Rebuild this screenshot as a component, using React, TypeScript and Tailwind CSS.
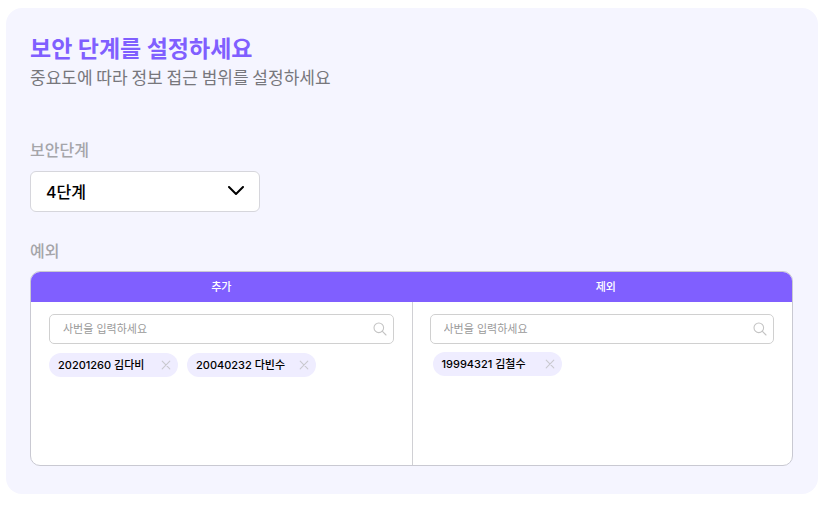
import React, { useState } from 'react'

type Employee = {
    id: string;
    name: string;
}

const SearchIcon = () => (
    <svg className="h-3.5 w-3.5" viewBox="0 0 14 14" fill="none" stroke="#c4c4c4" strokeWidth="1.1" strokeLinecap="round">
        <circle cx="5.8" cy="5.8" r="4.8" />
        <path d="M9.2 9.2L13 13" />
    </svg>
)

const CloseIcon = () => (
    <svg className="h-2.5 w-2.5" viewBox="0 0 10 10" fill="none" stroke="#c9c9cf" strokeWidth="1.1" strokeLinecap="round">
        <path d="M1.2 1.2L8.8 8.8M8.8 1.2L1.2 8.8" />
    </svg>
)

const EmployeeChip = ({ employee, onRemove }: { employee: Employee; onRemove: () => void }) => {
    return (
        <li className="flex h-6 min-w-[129px] items-center justify-between gap-3.5 rounded-full bg-[#efedff] pl-[9px] pr-[7px] text-[11px] font-medium text-black">
            <span className="whitespace-nowrap">{employee.id} {employee.name}</span>
            <button type="button" onClick={onRemove} aria-label={`${employee.name} 삭제`}>
                <CloseIcon />
            </button>
        </li>
    )
}

const ExceptionPanel = ({ label, initial, className, headerClassName, listClassName }: {
    label: string;
    initial: Employee[];
    className?: string;
    headerClassName: string;
    listClassName: string;
}) => {
    const [employees, setEmployees] = useState(initial);

    return (
        <section aria-label={label} className={className}>
            <h3 className={headerClassName}>
                {label}
            </h3>
            <div className="px-[18px] pt-3">
                <label className="flex h-[30px] items-center rounded-[5px] border border-[#d0d0d0] bg-white pl-[13px] pr-1.5">
                    <input
                        type="text"
                        aria-label={`${label} 사번`}
                        placeholder="사번을 입력하세요"
                        className="min-w-0 flex-1 text-[11px] outline-none placeholder:text-[#9a9a9a]"
                    />
                    <SearchIcon />
                </label>
                <ul className={listClassName}>
                    {employees.map((employee) => (
                        <EmployeeChip
                            key={employee.id}
                            employee={employee}
                            onRemove={() => setEmployees(employees.filter((e) => e.id !== employee.id))}
                        />
                    ))}
                </ul>
            </div>
        </section>
    )
}

const App = () => {
    const [level, setLevel] = useState("4");

    return (
        <div className="bg-white pt-2 pr-2.5 pb-3 pl-1.5 font-['Inter','Noto_Sans_CJK_KR',sans-serif]">
            <main className="rounded-2xl bg-[#f5f5ff] pt-[25px] pr-[25px] pb-7 pl-6">
                <h1 className="text-[23px] leading-8 font-bold text-[#805fff]">보안 단계를 설정하세요</h1>
                <p className="font-['Noto_Sans_CJK_KR',sans-serif] text-[17px] leading-6 text-[#77777c]">중요도에 따라 정보 접근 범위를 설정하세요</p>

                <label htmlFor="level" className="mt-[49px] block w-fit text-base leading-6 font-medium text-[#a5a5aa]">보안단계</label>
                <div className="relative mt-[9px] w-[230px]">
                    <select
                        id="level"
                        value={level}
                        onChange={(e) => setLevel(e.target.value)}
                        className="h-[41px] w-full appearance-none rounded-md border border-[#d6d6dc] bg-white px-[15px] text-base font-medium text-black outline-none"
                    >
                        <option value="1">1단계</option>
                        <option value="2">2단계</option>
                        <option value="3">3단계</option>
                        <option value="4">4단계</option>
                    </select>
                    <svg className="pointer-events-none absolute top-[15px] right-4 h-2.5 w-4" viewBox="0 0 16 10" fill="none" stroke="#000" strokeWidth="2" strokeLinecap="round" strokeLinejoin="round">
                        <path d="M1 1L8 8L15 1" />
                    </svg>
                </div>

                <h2 className="mt-[27px] text-base leading-6 font-medium text-[#a5a5aa]">예외</h2>
                <div className="mt-2 grid min-h-[195px] grid-cols-2 overflow-hidden rounded-[10px] border border-[#c9c9d2] bg-white">
                    <ExceptionPanel
                        label="추가"
                        initial={[
                            { id: "20201260", name: "김다비" },
                            { id: "20040232", name: "다빈수" },
                        ]}
                        headerClassName="flex h-[30px] items-center justify-center bg-[#805fff] text-[11px] font-medium text-white"
                        listClassName="mt-[9px] flex flex-wrap gap-[9px]"
                    />
                    <ExceptionPanel
                        label="제외"
                        initial={[{ id: "19994321", name: "김철수" }]}
                        className="bg-[linear-gradient(#d0d0d4,#d0d0d4)] bg-[length:1px_100%] bg-no-repeat"
                        headerClassName="flex h-[30px] items-center justify-center bg-[#805fff] pl-2 text-[11px] font-medium text-white"
                        listClassName="mt-2 flex flex-wrap gap-[9px] pl-[3px]"
                    />
                </div>
            </main>
        </div>
    );
}

export default App
